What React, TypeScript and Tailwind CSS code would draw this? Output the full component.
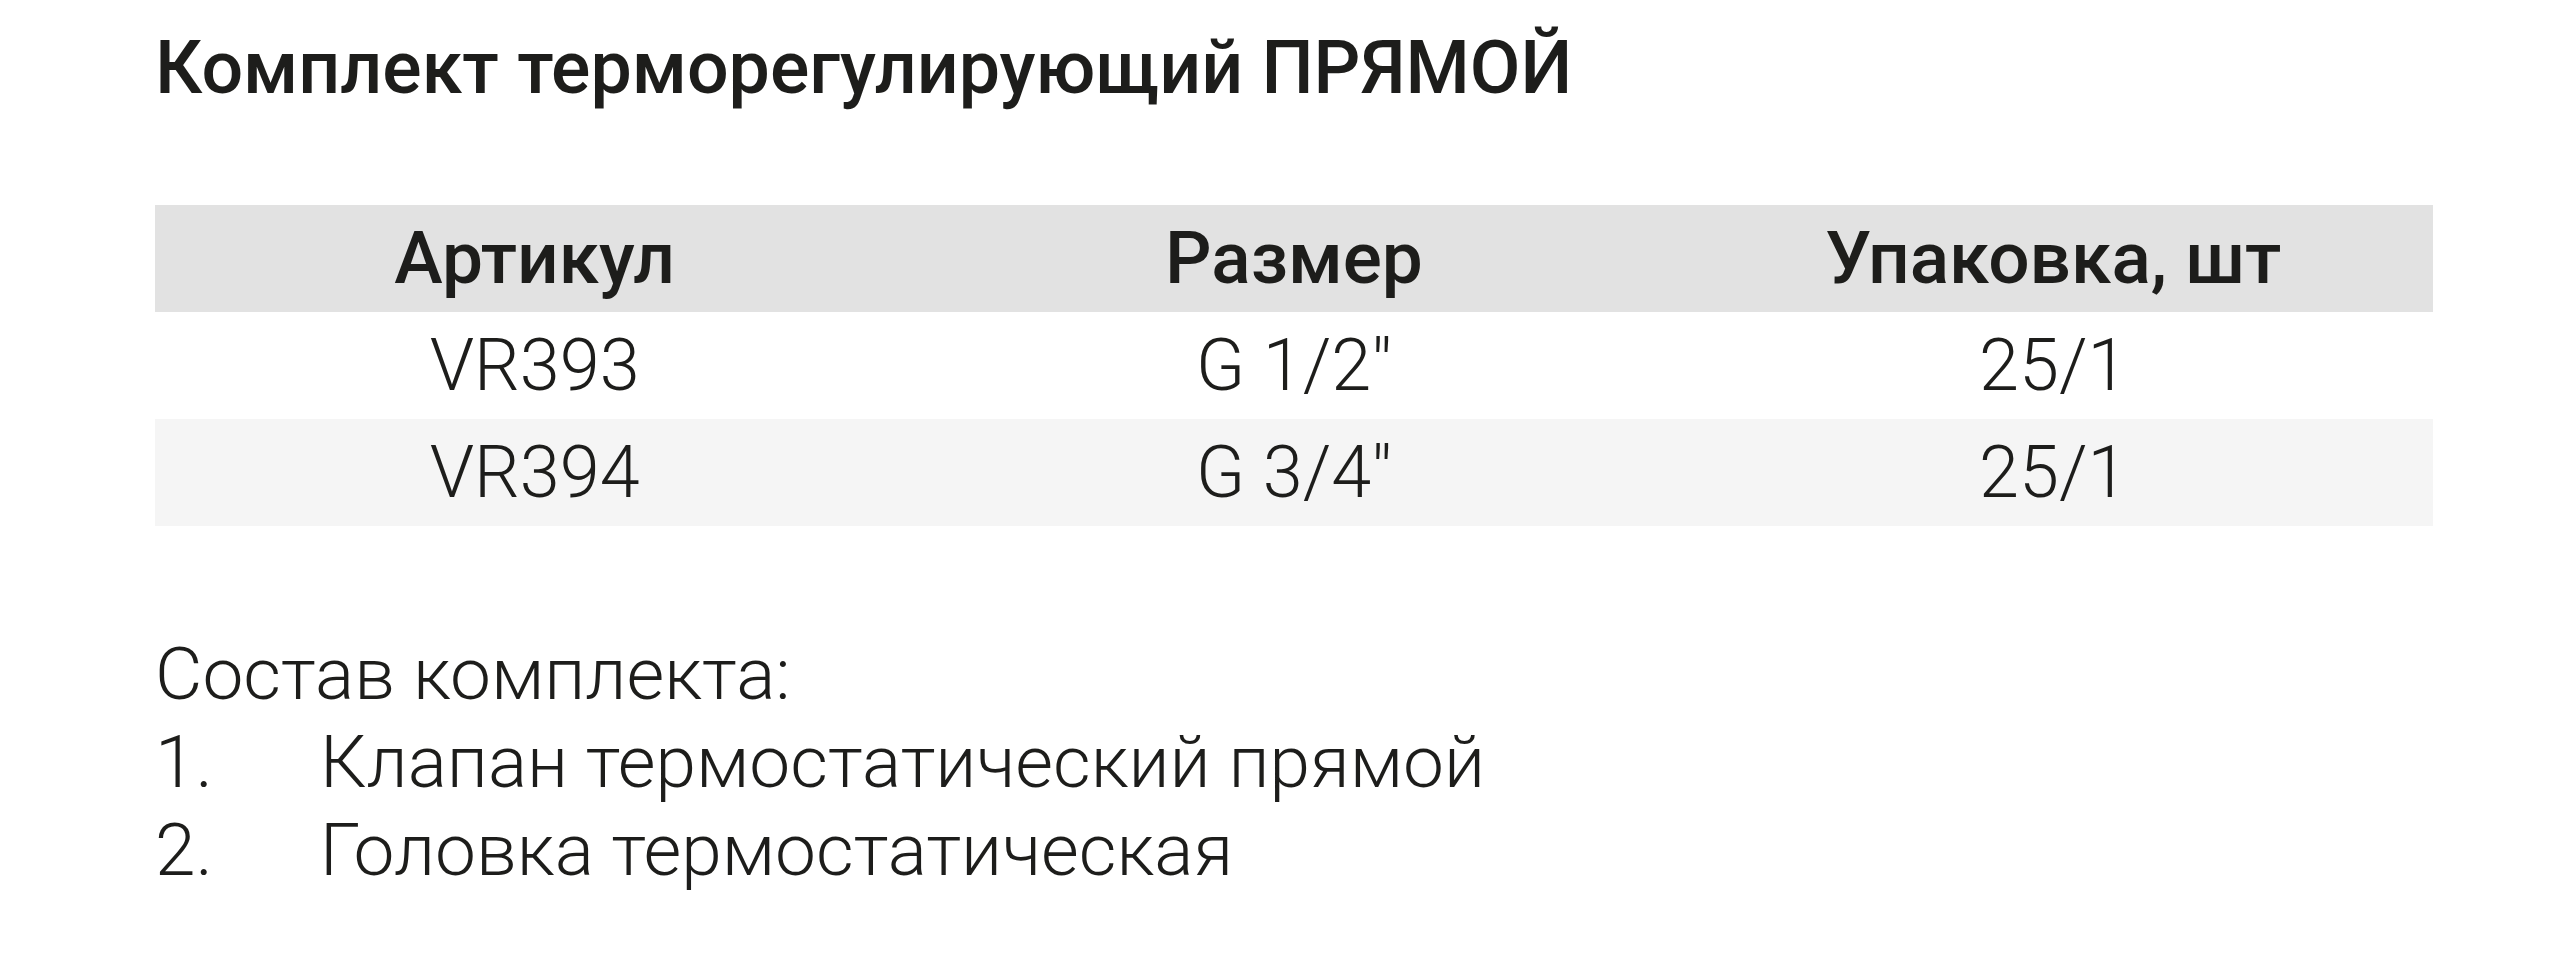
const rows = [
  { sku: 'VR393', size: 'G 1/2″', pack: '25/1' },
  { sku: 'VR394', size: 'G 3/4″', pack: '25/1' },
];

const items = ['Клапан термостатический прямой', 'Головка термостатическая'];

export default function App() {
  return (
    <div
      className="min-h-[968px] w-[2561px] bg-white pl-[155px] pt-[24px] text-[#1d1d1b]"
      style={{ fontFamily: 'Roboto, "Noto Sans", sans-serif' }}
    >
      <h1 className="text-[73.5px] font-medium leading-[88px]">Комплект терморегулирующий ПРЯМОЙ</h1>

      <div className="mt-[93px] w-[2278px]">
        <div className="grid h-[107px] grid-cols-3 items-center bg-[#e2e2e2] text-center text-[73px] font-medium leading-none">
          <div>Артикул</div>
          <div>Размер</div>
          <div>Упаковка, шт</div>
        </div>
        {rows.map((r, i) => (
          <div
            key={r.sku}
            className={`grid h-[107px] grid-cols-3 items-center text-center text-[72px] font-light leading-none ${
              i % 2 === 1 ? 'bg-[#f5f5f5]' : 'bg-white'
            }`}
          >
            <div>{r.sku}</div>
            <div>{r.size}</div>
            <div>{r.pack}</div>
          </div>
        ))}
      </div>

      <div className="mt-[104px] text-[73px] font-light leading-[88px]">
        <p>Состав комплекта:</p>
        {items.map((t, i) => (
          <div key={t} className="flex">
            <span className="w-[165px] shrink-0">{i + 1}.</span>
            <span>{t}</span>
          </div>
        ))}
      </div>
    </div>
  );
}
